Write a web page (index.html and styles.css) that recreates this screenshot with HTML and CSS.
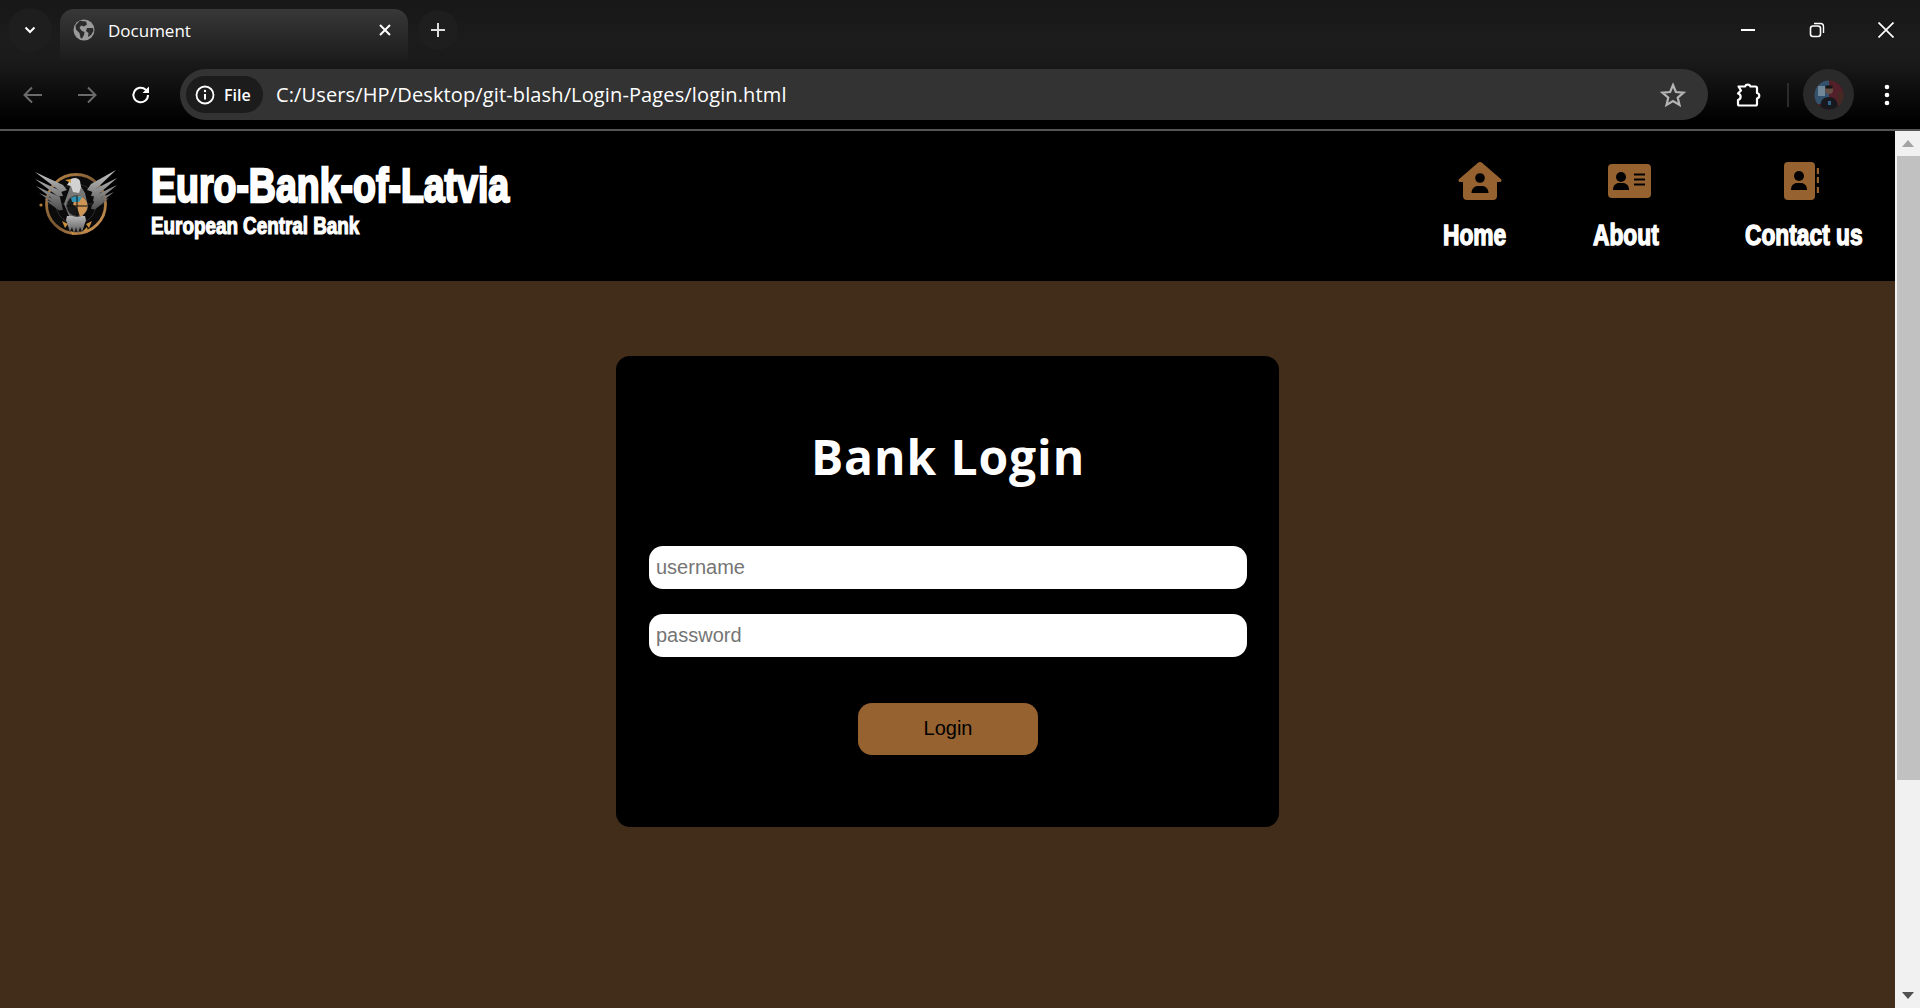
FILE: index.html
```html
<!DOCTYPE html>
<html lang="en">
<head>
<meta charset="utf-8">
<title>Document</title>
<link rel="stylesheet" href="styles.css">
</head>
<body>
<div class="chrome">
  <div class="tabstrip">
    <div class="tab-search"><svg width="14" height="14" viewBox="0 0 14 14"><path d="M2.500 4.500 7 9l4.500-4.500" fill="none" stroke="#fff" stroke-width="2"/></svg></div>
    <div class="tab">
      <svg class="favicon" width="22" height="22" viewBox="0 0 22 22"><circle cx="11" cy="11" r="10.500" fill="#9a9a9a"/><path d="M7 1.500c2 1 4 .5 6 1l1 3-3 2-3-1-1.500 2.500 2.500 3 2.500 1-.5 3-2 3.500-1.500-.5-1-5-3.500-3.500-.5-4zM14 9h6l.5 3-2.500 4-3 2 .5-4-2.500-2z" fill="#2b2b2b"/></svg>
      <span class="tab-title">Document</span>
      <svg class="tab-close" width="14" height="14" viewBox="0 0 14 14"><path d="M2 2l10 10M12 2 2 12" stroke="#fff" stroke-width="2"/></svg>
    </div>
    <div class="new-tab"><svg width="18" height="18" viewBox="0 0 18 18"><path d="M9 2v14M2 9h14" stroke="#ddd" stroke-width="2"/></svg></div>
    <div class="window-controls">
      <svg width="16" height="16" viewBox="0 0 16 16"><path d="M1 8h14" stroke="#fff" stroke-width="2"/></svg>
      <svg width="16" height="16" viewBox="0 0 16 16"><rect x="1.500" y="4" width="10" height="10.500" rx="2.500" fill="none" stroke="#fff" stroke-width="1.600"/><path d="M5 1.500h6.500a3 3 0 0 1 3 3V11" fill="none" stroke="#fff" stroke-width="1.400"/></svg>
      <svg width="16" height="16" viewBox="0 0 16 16"><path d="M.5.500l15 15M15.500.500l-15 15" stroke="#fff" stroke-width="1.700"/></svg>
    </div>
  </div>
  <div class="toolbar">
    <svg class="nav-btn" width="22" height="22" viewBox="0 0 22 22"><path d="M20 11H3M10 3.500 2.500 11l7.500 7.500" fill="none" stroke="#6a6a6a" stroke-width="2"/></svg>
    <svg class="nav-btn" width="22" height="22" viewBox="0 0 22 22"><path d="M2 11h17M12 3.500l7.500 7.500-7.500 7.500" fill="none" stroke="#6a6a6a" stroke-width="2"/></svg>
    <svg class="nav-btn" width="22" height="22" viewBox="0 0 22 22"><path d="M18 11a7.300 7.300 0 1 1-2.200-5.200L18 8" fill="none" stroke="#fff" stroke-width="2"/><path d="M19 2.500V9h-6.500z" fill="#fff"/></svg>
    <div class="omnibox">
      <div class="chip">
        <svg width="20" height="20" viewBox="0 0 20 20"><circle cx="10" cy="10" r="8.500" fill="none" stroke="#fff" stroke-width="1.800"/><path d="M10 9v5.500" stroke="#fff" stroke-width="2"/><circle cx="10" cy="6" r="1.200" fill="#fff"/></svg>
        <span class="chip-label">File</span>
      </div>
      <span class="url">C:/Users/HP/Desktop/git-blash/Login-Pages/login.html</span>
      <svg class="star" width="26" height="26" viewBox="0 0 26 26"><path d="M13 3l2.900 7 7.600.6-5.800 5 1.800 7.400L13 19.100 6.500 23l1.800-7.400-5.800-5 7.600-.6z" fill="none" stroke="#b5b5b5" stroke-width="2.200"/></svg>
    </div>
    <svg class="puzzle" width="26" height="26" viewBox="0 0 26 26"><path d="M3.500 4.500H10a3 3 0 0 1 5.500 0h5a1.500 1.500 0 0 1 1.500 1.500v5a2.800 2.800 0 0 1 0 5.500V22a1.500 1.500 0 0 1-1.500 1.500H4.500A1.500 1.500 0 0 1 3 22v-4c3.500-.8 3.500-5.500 0-6.500l3-3z" fill="none" stroke="#fff" stroke-width="2.200" stroke-linejoin="round"/></svg>
    <div class="divider"></div>
    <div class="avatar-wrap">
      <svg class="avatar" width="30" height="30" viewBox="0 0 30 30"><defs><clipPath id="av"><circle cx="15" cy="15" r="14.500"/></clipPath></defs><g clip-path="url(#av)"><rect width="30" height="30" fill="#5b1f29"/><rect width="15" height="24" fill="#35597a"/><rect x="4" y="6" width="7" height="10" fill="#7d97ad"/><rect x="24" y="12" width="6" height="18" fill="#4a2a22"/><circle cx="15" cy="10" r="4" fill="#6f5448"/><path d="M11.500 5.500h7v3h-7z" fill="#111"/><path d="M6 30c0-10 3-13 9-13s9 3 9 13z" fill="#14171c"/><path d="M14 21h3v4h-3z" fill="#2f6f9a"/></g></svg>
    </div>
    <svg class="dots" width="8" height="24" viewBox="0 0 8 24"><circle cx="4" cy="4" r="2.300" fill="#fff"/><circle cx="4" cy="12" r="2.300" fill="#fff"/><circle cx="4" cy="20" r="2.300" fill="#fff"/></svg>
  </div>
</div>
<div class="viewport">
  <div class="page">
    <header class="site-header">
      <div class="brand">
        <svg class="logo" width="84" height="72" viewBox="0 0 84 72">
          <defs>
            <linearGradient id="gold" x1="0" y1="0" x2="1" y2="1"><stop offset="0" stop-color="#c08a48"/><stop offset="0.5" stop-color="#7a5630"/><stop offset="1" stop-color="#e0a258"/></linearGradient>
            <linearGradient id="wing" gradientUnits="userSpaceOnUse" x1="0" y1="2" x2="0" y2="44"><stop offset="0" stop-color="#c8c8c8"/><stop offset="0.6" stop-color="#7c7c7c"/><stop offset="1" stop-color="#484848"/></linearGradient>
            <linearGradient id="tail" x1="0" y1="0" x2="0" y2="1"><stop offset="0" stop-color="#b8b8b8"/><stop offset="1" stop-color="#555"/></linearGradient>
          </defs>
          <circle cx="43" cy="36" r="29.500" fill="#0b0b0b" stroke="url(#gold)" stroke-width="2.800"/>
          <path d="M43 8v56M15 36h56" stroke="#2c2c2c" stroke-width="1"/>
          <circle cx="43" cy="36" r="20" fill="none" stroke="#2c2c2c"/>
          <g fill="url(#wing)">
            <path d="M2 4 30 17l4 5-6 2z"/>
            <path d="M2 11 28 23l2 5-5 .5z"/>
            <path d="M3 18 27 29l1 5-4 .5z"/>
            <path d="M6 25 28 34l1 4-4 .5z"/>
            <path d="M11 31 29 38l1 4-4 .5z"/>
            <path d="M83 2 58 16l-4 6 6 2z"/>
            <path d="M84 10 60 22l-2 6 5 .5z"/>
            <path d="M84 17 61 28l-1 5 4 .5z"/>
            <path d="M81 24 61 33l-1 4 4 .5z"/>
            <path d="M76 30 59 37l-1 4 4 .5z"/>
          </g>
          <path d="M34 48h18l1 4-4 12-2-5-2 7-2-7-2 7-2-7-2 5-4-12z" fill="url(#tail)"/>
          <path d="M36 22l2-8 8 1 6 10 2 9-4 14H36l-5-12z" fill="#777"/>
          <path d="M38 11c3-2 8-1 9 2l1 6-2 6-6-1-2-6-4-1z" fill="#d2d2d2"/>
          <path d="M32 12l6-1v4z" fill="#d79a3c"/>
          <circle cx="44" cy="38" r="10.500" fill="#181818" stroke="#565656"/>
          <path d="M44 27.500A10.500 10.500 0 0 1 54.500 38c0 5-4 9.500-7.500 10.500l-3-9-4-3 2-6z" fill="#cf9555"/>
          <path d="M38 30c3-2 8-2 11-1l-3 5h-7z" fill="#2f93b5"/>
          <path d="M33.500 38h21M44 27.500v21" stroke="#0d0d0d"/>
          <path d="M29 53l6 3-3 4zM59 53l-6 3 3 4zM38 63l5 3-4 1zM54 59l-4 4 5 0z" fill="#c98f3e"/>
          <circle cx="8" cy="37" r="1.600" fill="#b47c3a"/>
        </svg>
        <div class="brand-text">
          <h1 class="brand-name"><span class="squeeze">Euro-Bank-of-Latvia</span></h1>
          <p class="brand-sub"><span class="squeeze">European Central Bank</span></p>
        </div>
      </div>
      <nav class="site-nav">
        <a class="nav-item nav-home" href="#">
          <svg class="nav-icon" width="44" height="38" viewBox="0 0 44 38"><path d="M22 0c.8 0 1.500.3 2 .8l18.800 16.300c1.500 1.300.7 3-1 3H39v13.900a4 4 0 0 1-4 4H9a4 4 0 0 1-4-4V20H2.200c-1.700 0-2.500-1.700-1-3L20 .8c.5-.5 1.200-.8 2-.8z" fill="#966230"/><circle cx="22" cy="16" r="4.800" fill="#000"/><path d="M13.500 31c0-4 3-7 6-7h5c3 0 6 3 6 7z" fill="#000"/></svg>
          <span class="squeeze">Home</span>
        </a>
        <a class="nav-item nav-about" href="#">
          <svg class="nav-icon" width="43" height="34" viewBox="0 0 43 34"><rect width="43" height="34" rx="4" fill="#966230"/><circle cx="13" cy="13" r="5" fill="#000"/><path d="M5 26c0-5 3-7 6-7h4c3 0 6 2 6 7z" fill="#000"/><path d="M26 10.500h11M26 15.500h11M26 20.500h11" stroke="#000" stroke-width="2.200"/></svg>
          <span class="squeeze">About</span>
        </a>
        <a class="nav-item nav-contact" href="#">
          <svg class="nav-icon" width="35" height="38" viewBox="0 0 35 38"><rect width="31" height="38" rx="4" fill="#966230"/><circle cx="15" cy="14" r="5" fill="#000"/><path d="M7 28c0-5 3-7 6-7h4c3 0 6 2 6 7z" fill="#000"/><path d="M34 6v6M34 15v6M34 25v6" stroke="#966230" stroke-width="2.400"/></svg>
          <span class="squeeze">Contact us</span>
        </a>
      </nav>
    </header>
    <main class="content">
      <form class="login-card">
        <h2 class="login-title">Bank Login</h2>
        <input class="login-input first" type="text" placeholder="username">
        <input class="login-input" type="password" placeholder="password">
        <button class="login-btn" type="button">Login</button>
      </form>
    </main>
  </div>
  <div class="scrollbar">
    <div class="sb-arrow"><svg width="12" height="7" viewBox="0 0 12 7"><path d="M6 0l6 7H0z" fill="#a3a3a3"/></svg></div>
    <div class="sb-thumb"></div>
    <div class="sb-track"></div>
    <div class="sb-arrow"><svg width="12" height="7" viewBox="0 0 12 7"><path d="M6 7 0 0h12z" fill="#505050"/></svg></div>
  </div>
</div>
</body>
</html>
```
FILE: styles.css
```css
* { box-sizing: border-box; }
html, body { margin: 0; height: 100%; overflow: hidden; background: #000; }
body { display: flex; flex-direction: column; height: 1008px; font-family: "Liberation Sans", sans-serif; }
svg { display: block; flex: none; }

.chrome { height: 131px; flex: none; border-bottom: 2px solid #555; background: linear-gradient(#171717 0, #1c1c1c 40px, #1a1a1a 62px, #000 122px); font-family: "Open Sans", sans-serif; }

.tabstrip { display: flex; align-items: center; height: 60px; }
.tab-search { width: 44px; height: 44px; margin-left: 8px; border-radius: 22px; background: #1e1e1e; display: flex; align-items: center; justify-content: center; }
.tab { width: 348px; height: 51px; margin-left: 8px; align-self: flex-end; padding: 0 16px 9px 13px; border-radius: 14px 14px 0 0; background: linear-gradient(#383838, #1c1c1c); display: flex; align-items: center; color: #fff; }
.tab-title { font-size: 17px; margin-left: 13px; flex: 1; }
.new-tab { width: 40px; height: 40px; margin-left: 10px; border-radius: 20px; background: #1e1e1e; display: flex; align-items: center; justify-content: center; }
.window-controls { margin-left: auto; margin-right: 26px; display: flex; gap: 53px; }

.toolbar { display: flex; align-items: center; height: 51px; margin-top: 9px; padding-left: 22px; }
.nav-btn { margin-right: 32px; }
.nav-btn:nth-child(3) { margin-right: 26px; }
.omnibox { width: 1528px; height: 51px; margin-left: 2px; padding: 0 22px 0 6px; border-radius: 26px; background: #333; display: flex; align-items: center; color: #fff; }
.chip { height: 37px; width: 77px; padding-left: 9px; border-radius: 19px; background: #1c1c1c; display: flex; align-items: center; gap: 9px; }
.chip-label { font-size: 16px; font-weight: 600; }
.url { font-size: 20px; margin-left: 13px; flex: 1; letter-spacing: 0.13px; }
.puzzle { margin-left: 27px; }
.divider { width: 2px; height: 24px; margin-left: 26px; background: #2b2b2b; }
.avatar-wrap { width: 51px; height: 51px; margin-left: 14px; border-radius: 50%; background: #2a2a2a; display: flex; align-items: center; justify-content: center; }
.avatar { opacity: 0.85; }
.dots { margin-left: 29px; }

.viewport { flex: 1; display: flex; min-height: 0; }
.page { flex: 1; display: flex; flex-direction: column; background: #422d1b; min-width: 0; }
.scrollbar { width: 25px; flex: none; background: #f1f1f1; display: flex; flex-direction: column; }
.sb-arrow { height: 25px; display: flex; align-items: center; justify-content: center; }
.sb-thumb { height: 624px; margin-left: 2px; background: #c1c1c1; }
.sb-track { flex: 1; }

.site-header { height: 150px; flex: none; background: #000; display: flex; justify-content: space-between; padding: 36px 0 0 33px; }
.brand { display: flex; align-items: flex-start; }
.logo { margin-top: 1px; }
.squeeze { display: inline-block; white-space: nowrap; transform-origin: left center; }
.brand-text { margin-left: 34px; margin-top: -9px; color: #fff; }
.brand-name { margin: 0; font-size: 49px; line-height: 54px; font-weight: 700; -webkit-text-stroke: 2.400px #fff; }
.brand-name .squeeze { transform: scaleX(0.765); }
.brand-sub { margin: 1px 0 0; font-size: 24px; line-height: 26px; font-weight: 700; -webkit-text-stroke: 1.200px #fff; }
.brand-sub .squeeze { transform: scaleX(0.785); }

.site-nav { display: flex; padding-right: 33px; margin-top: -5px; }
.nav-item { display: flex; flex-direction: column; align-items: flex-start; color: #fff; text-decoration: none; font-weight: 700; font-size: 29px; line-height: 32px; -webkit-text-stroke: 1.400px #fff; }
.nav-item .squeeze { transform: scaleX(0.785); }
.nav-icon { margin-bottom: 19px; }
.nav-home { width: 150px; }
.nav-home .nav-icon { margin-left: 15px; }
.nav-about { width: 152px; }
.nav-about .nav-icon { margin-left: 15px; margin-top: 2px; margin-bottom: 21px; }
.nav-contact { width: 117px; }
.nav-contact .nav-icon { margin-left: 39px; }

.content { flex: 1; display: flex; justify-content: center; align-items: flex-start; padding-top: 75px; }
.login-card { width: 663px; height: 471px; padding: 69px 32px 0 33px; border-radius: 14px; background: #000; display: flex; flex-direction: column; align-items: stretch; }
.login-title { margin: 0; height: 64px; text-align: center; color: #fff; font-family: "Open Sans", sans-serif; font-size: 48px; line-height: 64px; font-weight: 700; letter-spacing: 0.900px; }
.login-input { height: 43px; margin-top: 25px; padding: 0 7px; border: 0; border-radius: 14px; background: #fff; font-family: "Liberation Sans", sans-serif; font-size: 20px; outline: none; }
.login-input.first { margin-top: 57px; }
.login-input::placeholder { color: #757575; opacity: 1; }
.login-btn { width: 180px; height: 52px; margin: 46px auto 0; padding: 0 0 2px; border: 0; border-radius: 14px; background: #966230; color: #000; font-family: "Liberation Sans", sans-serif; font-size: 20px; }
```
